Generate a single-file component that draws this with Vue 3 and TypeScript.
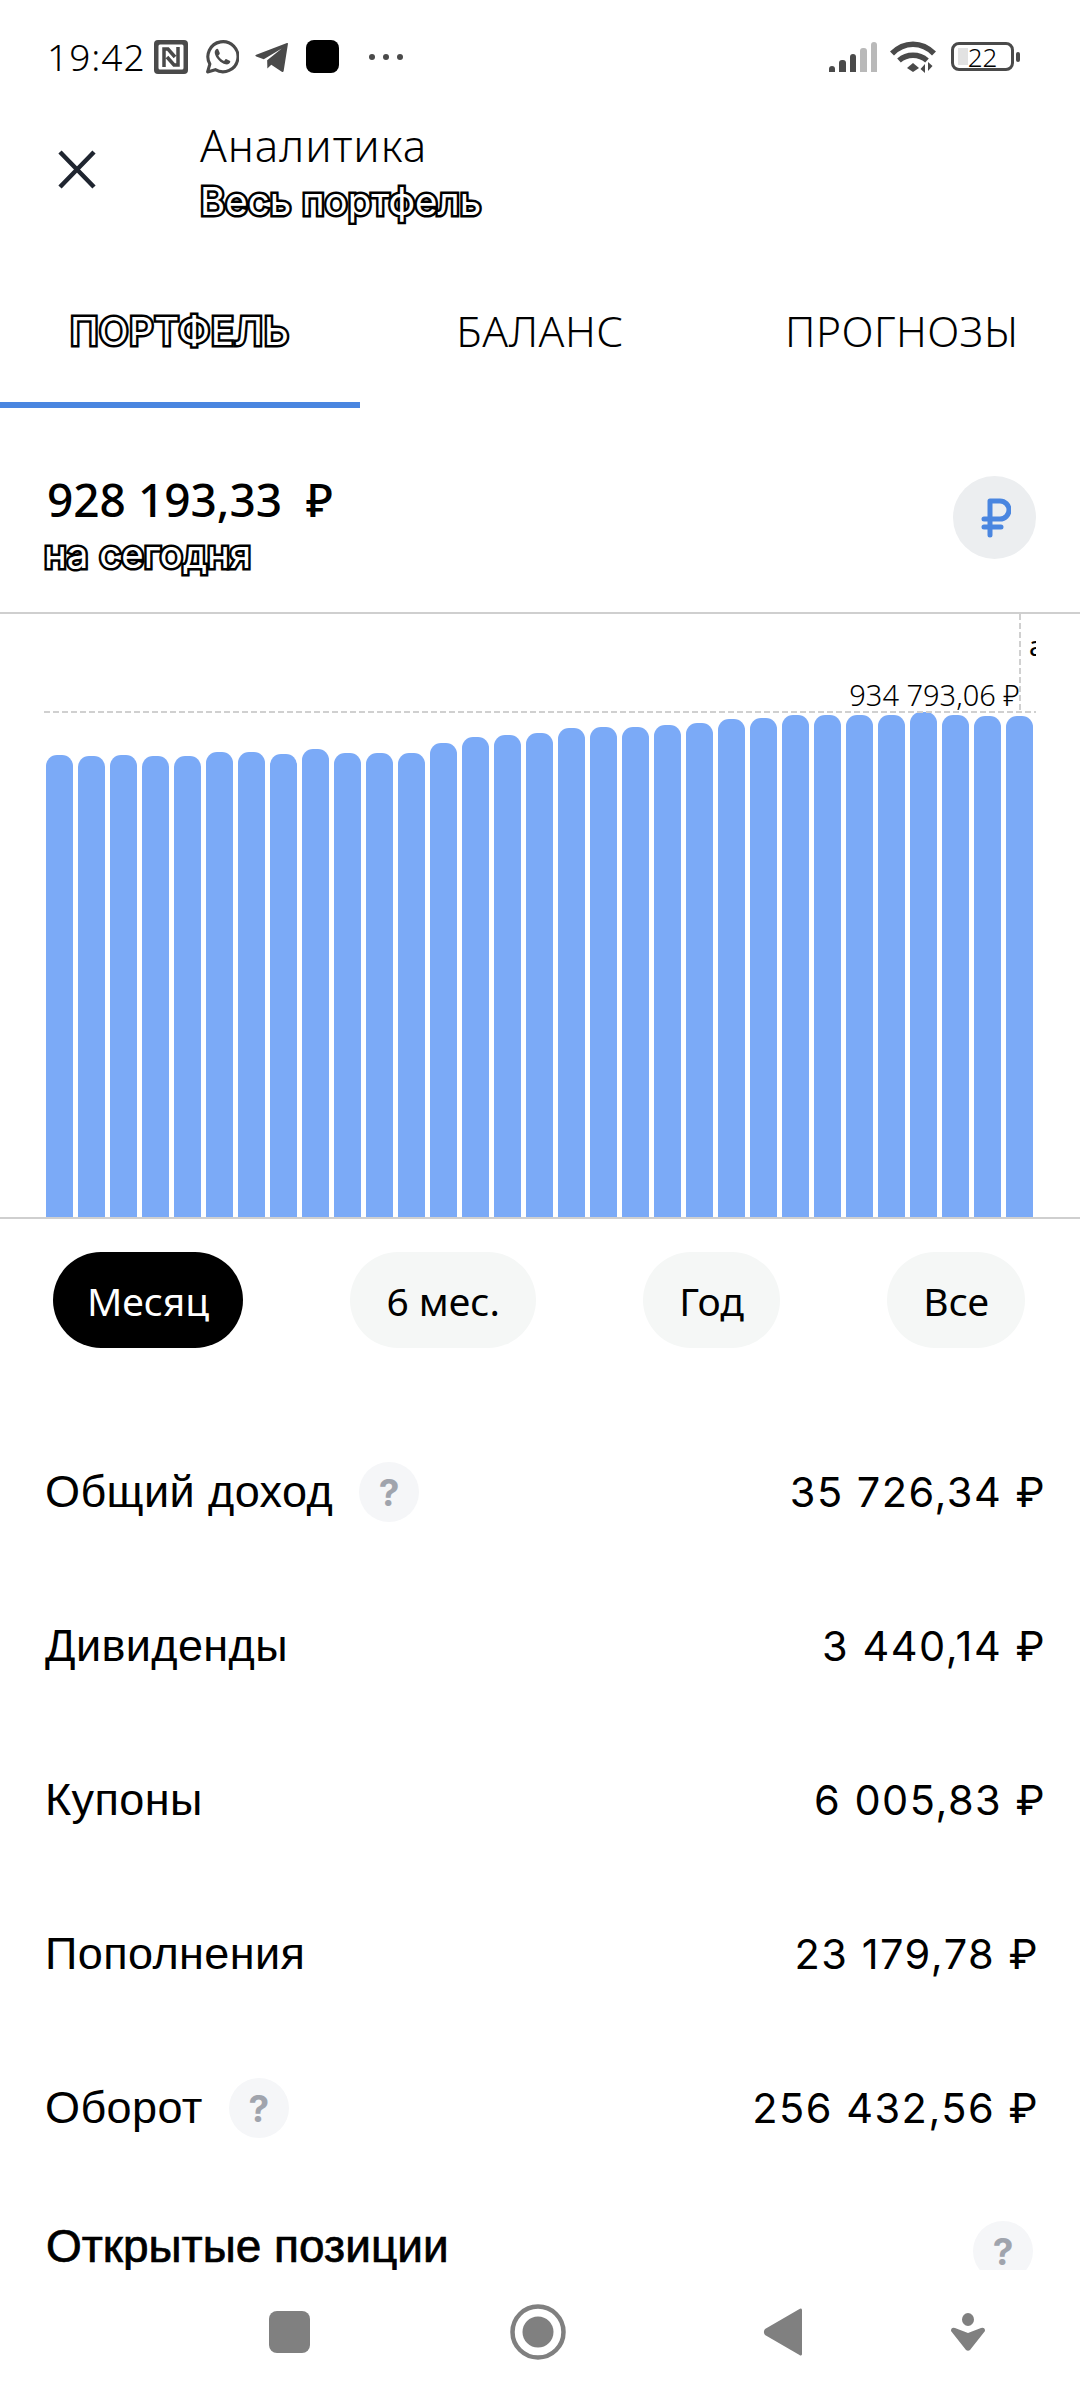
<script setup lang="ts">
// top edge of each bar, measured down from the chart's top line
const barTops: number[] = [
    143, 144, 143, 144, 144, 140, 140, 142, 137, 141, 141, 141, 131, 125, 123, 121,
    116, 115, 115, 113, 111, 107, 106, 103, 103, 103, 103, 100, 103, 104, 104,
];
const chartHeight = 607;
const bars = barTops.map((top) => chartHeight - top);

const periods = ['Месяц', '6 мес.', 'Год', 'Все'];

const rows = [
    { label: 'Общий доход', value: '35 726,34 ₽', help: true, narrow: false },
    { label: 'Дивиденды', value: '3 440,14 ₽', help: false, narrow: false },
    { label: 'Купоны', value: '6 005,83 ₽', help: false, narrow: false },
    { label: 'Пополнения', value: '23 179,78 ₽', help: false, narrow: true },
    { label: 'Оборот', value: '256 432,56 ₽', help: true, narrow: true },
];
</script>

<template>
    <div class="page">
        <!-- Status bar -->
        <div class="status">
            <span class="clock">19:42</span>
            <svg class="st-icon nfc" viewBox="0 0 34 34">
                <rect x="0" y="0" width="34" height="34" rx="4" fill="#4a4a4a" />
                <rect x="4.500" y="4.500" width="25" height="25" rx="1.500" fill="#fff" />
                <path
                    d="M10 27V9h4l7 8M24 7v18h-4l-7-8"
                    fill="none"
                    stroke="#4a4a4a"
                    stroke-width="3.500"
                />
            </svg>
            <svg class="st-icon wa" viewBox="0 0 33 33">
                <path
                    d="M2.500 31l2.200-7.600A14.600 14.600 0 1 1 10 28.800z"
                    fill="none"
                    stroke="#4a4a4a"
                    stroke-width="3"
                    stroke-linejoin="round"
                />
                <path
                    d="M11.600 8.600c-1.600.8-2.600 2.600-2 4.700 1.200 4.600 5.600 9 10.300 10.300 2.200.5 4-.5 4.600-2.200.2-.6 0-1-.5-1.300l-3.100-1.500c-.5-.2-.9-.1-1.200.3l-1.200 1.400c-2.400-.9-4.400-2.800-5.600-5.200l1.200-1.300c.3-.4.3-.8.2-1.200l-1.400-3.300c-.2-.6-.8-.9-1.300-.7z"
                    fill="#4a4a4a"
                />
            </svg>
            <svg class="st-icon tg" viewBox="0 0 33 33">
                <path
                    d="M32 3.600 27.800 30c-.2.900-1 1.200-1.800.7L15.800 24l-3.800 3.600-.2-8L26 8.200 8.500 18.600 1.200 16c-1.100-.4-1.100-1.200 0-1.600L31 3c.7-.2 1.100 0 1 .6z"
                    fill="#4a4a4a"
                />
            </svg>
            <span class="app-square"></span>
            <span class="dots"><i></i><i></i><i></i></span>

            <span class="status-right">
                <span class="signal">
                    <i class="s1"></i><i class="s2"></i><i class="s3"></i>
                    <i class="s4 off"></i><i class="s5 off"></i>
                </span>
                <svg class="wifi" viewBox="0 0 46 33">
                    <path d="M2 13.500C14 1 32 1 44 13.500" fill="none" stroke="#4a4a4a" stroke-width="5.500" />
                    <path d="M9 20.500c8-7 20-7 28 0" fill="none" stroke="#4a4a4a" stroke-width="5.500" />
                    <path d="M17 28l6-5 6 5-6 4z" fill="#4a4a4a" />
                    <path d="M35 33V24l-4.500 5zM38 22v9l4.500-5z" fill="#4a4a4a" />
                </svg>
                <span class="battery">
                    <span class="battery-body">
                        <span class="battery-fill"></span>
                        <span class="battery-text">22</span>
                    </span>
                    <span class="battery-nub"></span>
                </span>
            </span>
        </div>

        <!-- Header -->
        <div class="header">
            <svg class="close" viewBox="0 0 38 39">
                <path d="M2 2l34 35M36 2 2 37" fill="none" stroke="#1f2530" stroke-width="4.500" />
            </svg>
            <div class="titles">
                <div class="title">Аналитика</div>
                <div class="subtitle outlined">Весь портфель</div>
            </div>
        </div>

        <!-- Tabs -->
        <div class="tabs">
            <div class="tab tab-active"><span class="outlined">ПОРТФЕЛЬ</span></div>
            <div class="tab tab-mid">БАЛАНС</div>
            <div class="tab tab-last">ПРОГНОЗЫ</div>
        </div>

        <!-- Total -->
        <div class="total">
            <div>
                <div class="total-sum">928 193,33<span class="total-cur">₽</span></div>
                <div class="total-note outlined">на сегодня</div>
            </div>
            <div class="cur-btn">
                <svg viewBox="0 0 30 40" width="30" height="40">
                    <path
                        d="M9 37V3h10a9 9 0 0 1 0 18H3M3 29h17"
                        fill="none"
                        stroke="#4a86e0"
                        stroke-width="5"
                        stroke-linecap="round"
                        stroke-linejoin="round"
                    />
                </svg>
            </div>
        </div>

        <!-- Chart -->
        <div class="chart">
            <div class="bars">
                <div
                    v-for="(h, i) in bars"
                    :key="i"
                    class="bar"
                    :style="{ height: h + 'px' }"
                ></div>
            </div>
            <div class="guide-h"></div>
            <div class="guide-v"></div>
            <div class="peak">934 793,06 ₽</div>
            <div class="clipped">а</div>
        </div>

        <!-- Period -->
        <div class="periods">
            <div
                v-for="(p, i) in periods"
                :key="p"
                class="chip"
                :class="{ 'chip-active': i === 0 }"
            >
                {{ p }}
            </div>
        </div>

        <!-- Rows -->
        <div class="rows">
            <div v-for="r in rows" :key="r.label" class="row" :class="{ 'row-narrow': r.narrow }">
                <div class="row-label">
                    <span>{{ r.label }}</span>
                    <span v-if="r.help" class="help">?</span>
                </div>
                <div class="row-value">{{ r.value }}</div>
            </div>
        </div>

        <div class="section">
            <span class="section-title">Открытые позиции</span>
            <span class="help help-section">?</span>
        </div>

        <!-- Navigation bar -->
        <div class="nav">
            <span class="nav-square"></span>
            <svg class="nav-circle" viewBox="0 0 56 58">
                <circle cx="28" cy="29" r="25.500" fill="none" stroke="#808080" stroke-width="4.500" />
                <circle cx="28" cy="29" r="15.500" fill="#808080" />
            </svg>
            <svg class="nav-back" viewBox="0 0 40 48">
                <path d="M39 2v44c0 1.500-1.500 2-2.500 1L2 27c-1.500-1.800-1.500-4 0-6L36.500 1C37.500 0 39 .500 39 2z" fill="#808080" />
            </svg>
            <svg class="nav-person" viewBox="0 0 36 38">
                <ellipse cx="18" cy="6.500" rx="6" ry="6.500" fill="#808080" />
                <path d="M1 18Q1 14 5 15L18 20 31 15Q35 14 35 18L20 37Q18 38.500 16 37Z" fill="#808080" />
            </svg>
        </div>
    </div>
</template>

<style scoped>
.page {
    width: 1080px;
    height: 2400px;
    overflow: hidden;
    background: #fff;
    color: #000;
    font-family: 'Inter', 'Liberation Sans', sans-serif;
    display: flex;
    flex-direction: column;
}

.status {
    height: 113px;
    flex: none;
    display: flex;
    align-items: center;
    padding: 0 60px 0 47px;
    box-sizing: border-box;
}

.clock {
    width: 107px;
    font-family: 'Noto Sans', sans-serif;
    font-size: 37px;
    font-weight: 300;
    letter-spacing: 1px;
}

.st-icon {
    width: 34px;
    height: 34px;
    flex: none;
}

.wa {
    margin-left: 17px;
}

.tg {
    margin-left: 16px;
}

.app-square {
    width: 33px;
    height: 33px;
    margin-left: 17px;
    border-radius: 8px;
    background: #000;
}

.dots {
    margin-left: 30px;
    display: flex;
    gap: 8px;
}

.dots i {
    width: 6px;
    height: 6px;
    border-radius: 50%;
    background: #4a4a4a;
}

.status-right {
    margin-left: auto;
    display: flex;
    align-items: center;
}

.signal {
    display: flex;
    align-items: flex-end;
    gap: 4px;
    height: 30px;
}

.signal i {
    width: 6.400px;
    background: #4a4a4a;
    border-radius: 3px 3px 0 0;
}

.signal .off {
    background: #b9b9b9;
}

.s1 { height: 6px; }
.s2 { height: 12px; }
.s3 { height: 18px; }
.s4 { height: 24px; }
.s5 { height: 30px; }

.wifi {
    width: 46px;
    height: 33px;
    margin-left: 13px;
}

.battery {
    margin-left: 15px;
    display: flex;
    align-items: center;
    gap: 2px;
}

.battery-body {
    position: relative;
    width: 63px;
    height: 29px;
    box-sizing: border-box;
    border: 3px solid #4a4a4a;
    border-radius: 8px;
    display: flex;
    align-items: center;
    justify-content: center;
}

.battery-fill {
    position: absolute;
    left: 4px;
    top: 3px;
    bottom: 3px;
    width: 10px;
    background: #e2e2e2;
}

.battery-text {
    position: relative;
    font-family: 'Noto Sans', sans-serif;
    font-size: 26px;
    font-weight: 300;
    line-height: 1;
}

.battery-nub {
    width: 4px;
    height: 10px;
    background: #4a4a4a;
    border-radius: 2px;
}

.header {
    height: 120px;
    flex: none;
    display: flex;
    align-items: flex-start;
    box-sizing: border-box;
    padding-left: 58px;
}

.close {
    width: 38px;
    height: 39px;
    margin-top: 37px;
    flex: none;
}

.titles {
    margin-left: 104px;
    margin-top: 6px;
}

.title {
    font-family: 'Noto Sans', sans-serif;
    font-size: 44px;
    font-weight: 300;
    line-height: 52px;
    letter-spacing: 1px;
}

.subtitle {
    font-size: 38.500px;
    line-height: 44px;
    margin-top: 8px;
}

/* white letters with a dark contour */
.outlined {
    color: #fff;
    -webkit-text-stroke: 5px #000;
    paint-order: stroke fill;
    font-family: 'Inter', sans-serif;
    font-weight: 400;
}

.tabs {
    height: 175px;
    flex: none;
    display: grid;
    grid-template-columns: 360px 360px 360px;
    box-sizing: border-box;
}

.tab {
    display: flex;
    align-items: center;
    justify-content: center;
    height: 175px;
    box-sizing: border-box;
    padding-top: 20px;
    font-family: 'Noto Sans', sans-serif;
    font-size: 42.500px;
    font-weight: 300;
    letter-spacing: 0.5px;
}

.tab-active {
    border-bottom: 6px solid #4a86e0;
    padding-top: 26px;
    justify-content: flex-start;
    padding-left: 70px;
}

.tab-active .outlined {
    font-size: 38.500px;
}

.tab-last {
    justify-content: flex-start;
    padding-left: 65px;
}

.total {
    height: 204px;
    flex: none;
    display: flex;
    align-items: flex-start;
    justify-content: space-between;
    box-sizing: border-box;
    padding: 65px 44px 0 44px;
}

.total-sum {
    font-family: 'Noto Sans', sans-serif;
    font-size: 46px;
    font-weight: 500;
    line-height: 52px;
    padding-left: 3px;
}

.total-cur {
    margin-left: 24px;
}

.total-note {
    font-size: 38.500px;
    line-height: 44px;
    margin-top: 7px;
}

.cur-btn {
    width: 83px;
    height: 83px;
    margin-top: 3px;
    padding-left: 3px;
    box-sizing: border-box;
    border-radius: 50%;
    background: #eceef0;
    display: flex;
    align-items: center;
    justify-content: center;
}

.chart {
    position: relative;
    height: 607px;
    flex: none;
    box-sizing: border-box;
    border-top: 2px solid #cfcfcf;
    border-bottom: 2px solid #cfcfcf;
    overflow: hidden;
}

.bars {
    position: absolute;
    left: 46px;
    bottom: -2px;
    display: flex;
    align-items: flex-end;
    gap: 5px;
}

.bar {
    width: 27px;
    background: #7baaf7;
    border-radius: 11px 11px 0 0;
}

.guide-h {
    position: absolute;
    left: 44px;
    width: 992px;
    top: 97px;
    height: 2px;
    background: repeating-linear-gradient(90deg, #d0d0d0 0 6px, transparent 6px 9px);
}

.guide-v {
    position: absolute;
    left: 1019px;
    top: 0;
    width: 2px;
    height: 98px;
    background: repeating-linear-gradient(180deg, #d0d0d0 0 6px, transparent 6px 9px);
}

.peak {
    position: absolute;
    right: 60px;
    top: 64px;
    font-family: 'Noto Sans', sans-serif;
    font-size: 29px;
    line-height: 34px;
    font-weight: 300;
}

.clipped {
    position: absolute;
    left: 1029px;
    width: 7px;
    top: 14px;
    overflow: hidden;
    font-family: 'Noto Sans', sans-serif;
    font-size: 28px;
    line-height: 34px;
}

.periods {
    height: 196px;
    flex: none;
    display: flex;
    align-items: flex-start;
    justify-content: space-between;
    box-sizing: border-box;
    padding: 33px 55px 0 53px;
}

.chip {
    height: 96px;
    padding: 0 36px;
    border-radius: 48px;
    background: #f5f7f6;
    display: flex;
    align-items: center;
    font-family: 'Noto Sans', sans-serif;
    font-size: 39px;
}

.chip-active {
    padding: 0 34px;
    background: #000;
    color: #fff;
}

.rows {
    flex: none;
    display: flex;
    flex-direction: column;
}

.row {
    height: 154px;
    display: flex;
    align-items: center;
    justify-content: space-between;
    padding: 0 34px 0 45px;
}

.row-narrow {
    padding-right: 41px;
}

.row-label {
    display: flex;
    align-items: center;
    gap: 26px;
    font-family: 'Liberation Sans', sans-serif;
    font-size: 45px;
    letter-spacing: 0.4px;
}

.row-value {
    font-size: 41.500px;
    font-weight: 400;
    letter-spacing: 1.500px;
}

.help {
    width: 60px;
    height: 60px;
    border-radius: 50%;
    background: #f5f6f8;
    color: #a0a4ad;
    display: flex;
    align-items: center;
    justify-content: center;
    font-family: 'Inter', sans-serif;
    font-size: 37px;
    font-weight: 700;
    letter-spacing: 0;
}

.section {
    flex: 1;
    display: flex;
    justify-content: space-between;
    align-items: flex-start;
    padding: 36px 47px 0 46px;
    overflow: hidden;
    min-height: 0;
}

.section-title {
    font-family: 'Liberation Sans', sans-serif;
    font-size: 46px;
    line-height: 50px;
    -webkit-text-stroke: 0.7px #000;
}

.nav {
    height: 130px;
    flex: none;
    position: relative;
    display: flex;
    align-items: center;
    background: #fff;
    padding-left: 269px;
    box-sizing: border-box;
    padding-bottom: 6px;
}

.nav-square {
    width: 41px;
    height: 42px;
    border-radius: 8px;
    background: #808080;
}

.nav-circle {
    width: 56px;
    height: 58px;
    margin-left: 200px;
}

.nav-back {
    width: 40px;
    height: 48px;
    margin-left: 197px;
}

.nav-person {
    width: 36px;
    height: 38px;
    margin-left: 147px;
}
</style>

<style>
html,
body {
    margin: 0;
    background: #fff;
}
</style>
